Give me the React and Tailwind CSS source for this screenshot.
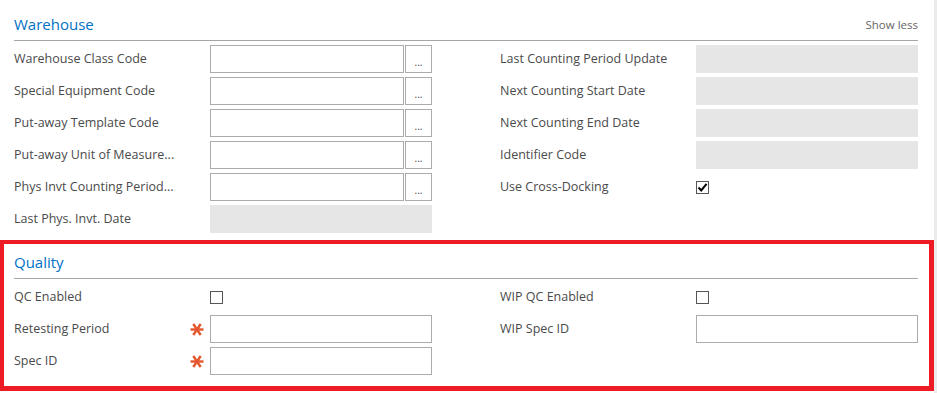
import React from 'react';

function Asterisk() {
  return (
    <svg width="14" height="13" viewBox="0 0 14 13" className="mr-[6px] shrink-0">
      <g stroke="#e4572e" strokeWidth="2.4" strokeLinecap="butt">
        <line x1="0.5" y1="6.5" x2="13.5" y2="6.5" />
        <line x1="3.3" y1="1" x2="10.7" y2="12" />
        <line x1="10.7" y1="1" x2="3.3" y2="12" />
      </g>
    </svg>
  );
}

function LookupField() {
  return (
    <div className="flex h-[28px] w-[222px] gap-[1px]">
      <div className="h-full flex-1 border border-[#ababab] bg-white" />
      <button className="h-full w-[27px] border border-[#ababab] bg-white pt-[5px] text-[10px] leading-none text-[#444]">
        ...
      </button>
    </div>
  );
}

function ReadOnlyField() {
  return <div className="h-[28px] w-[222px] bg-[#e6e6e6]" />;
}

function TextField() {
  return <div className="h-[28px] w-[222px] border border-[#ababab] bg-white" />;
}

function CheckField({ checked }) {
  return (
    <div className="flex h-[28px] w-[222px] items-center">
      <div className="flex h-[13px] w-[13px] items-center justify-center border border-[#555] bg-white">
        {checked && (
          <svg width="11" height="11" viewBox="0 0 11 11">
            <path d="M1.5 5.5 L4.2 8.4 L9.6 1.8" fill="none" stroke="#000" strokeWidth="2" />
          </svg>
        )}
      </div>
    </div>
  );
}

function Field({ label, type, required }) {
  return (
    <div className="flex h-[28px] items-center">
      <div className="flex w-[196px] items-center justify-between pt-[1px]">
        <span className="whitespace-nowrap text-[12.5px] text-[#4a4a4a]">{label}</span>
        {required && <Asterisk />}
      </div>
      {type === 'lookup' && <LookupField />}
      {type === 'readonly' && <ReadOnlyField />}
      {type === 'text' && <TextField />}
      {type === 'check' && <CheckField />}
      {type === 'checked' && <CheckField checked />}
    </div>
  );
}

function Section({ title, extra, left, right, padTop }) {
  return (
    <div>
      <div className={`flex items-end justify-between border-b border-[#a6a6a6] pb-[5px] ${padTop}`}>
        <h2 className="text-[15px] leading-[22px] text-[#0072c6]">{title}</h2>
        {extra && <span className="pb-[2px] text-[11.5px] text-[#666]">{extra}</span>}
      </div>
      <div className="mt-[4px] grid grid-cols-2 gap-x-[68px]">
        <div className="flex flex-col gap-[4px]">
          {left.map((f) => (
            <Field key={f.label} {...f} />
          ))}
        </div>
        <div className="flex flex-col gap-[4px]">
          {right.map((f) => (
            <Field key={f.label} {...f} />
          ))}
        </div>
      </div>
    </div>
  );
}

export default function App() {
  const warehouseLeft = [
    { label: 'Warehouse Class Code', type: 'lookup' },
    { label: 'Special Equipment Code', type: 'lookup' },
    { label: 'Put-away Template Code', type: 'lookup' },
    { label: 'Put-away Unit of Measure...', type: 'lookup' },
    { label: 'Phys Invt Counting Period...', type: 'lookup' },
    { label: 'Last Phys. Invt. Date', type: 'readonly' },
  ];
  const warehouseRight = [
    { label: 'Last Counting Period Update', type: 'readonly' },
    { label: 'Next Counting Start Date', type: 'readonly' },
    { label: 'Next Counting End Date', type: 'readonly' },
    { label: 'Identifier Code', type: 'readonly' },
    { label: 'Use Cross-Docking', type: 'checked' },
  ];
  const qualityLeft = [
    { label: 'QC Enabled', type: 'check' },
    { label: 'Retesting Period', type: 'text', required: true },
    { label: 'Spec ID', type: 'text', required: true },
  ];
  const qualityRight = [
    { label: 'WIP QC Enabled', type: 'check' },
    { label: 'WIP Spec ID', type: 'text' },
  ];

  return (
    <div className="flex h-[393px] w-[937px] overflow-hidden bg-white font-['Open_Sans',sans-serif]">
      <div className="w-[934px]">
        <div className="pl-[14px] pr-[16px]">
          <Section
            title="Warehouse"
            extra="Show less"
            left={warehouseLeft}
            right={warehouseRight}
            padTop="pt-[13px]"
          />
        </div>
        <div className="mt-[7px] border-b-[5px] border-l-4 border-r-[5px] border-t-4 border-[#ed1c24] pb-[11px] pl-[10px] pr-[11px]">
          <Section title="Quality" left={qualityLeft} right={qualityRight} padTop="pt-[7px]" />
        </div>
      </div>
      <div className="w-[3px] bg-[#ebebeb]" />
    </div>
  );
}
